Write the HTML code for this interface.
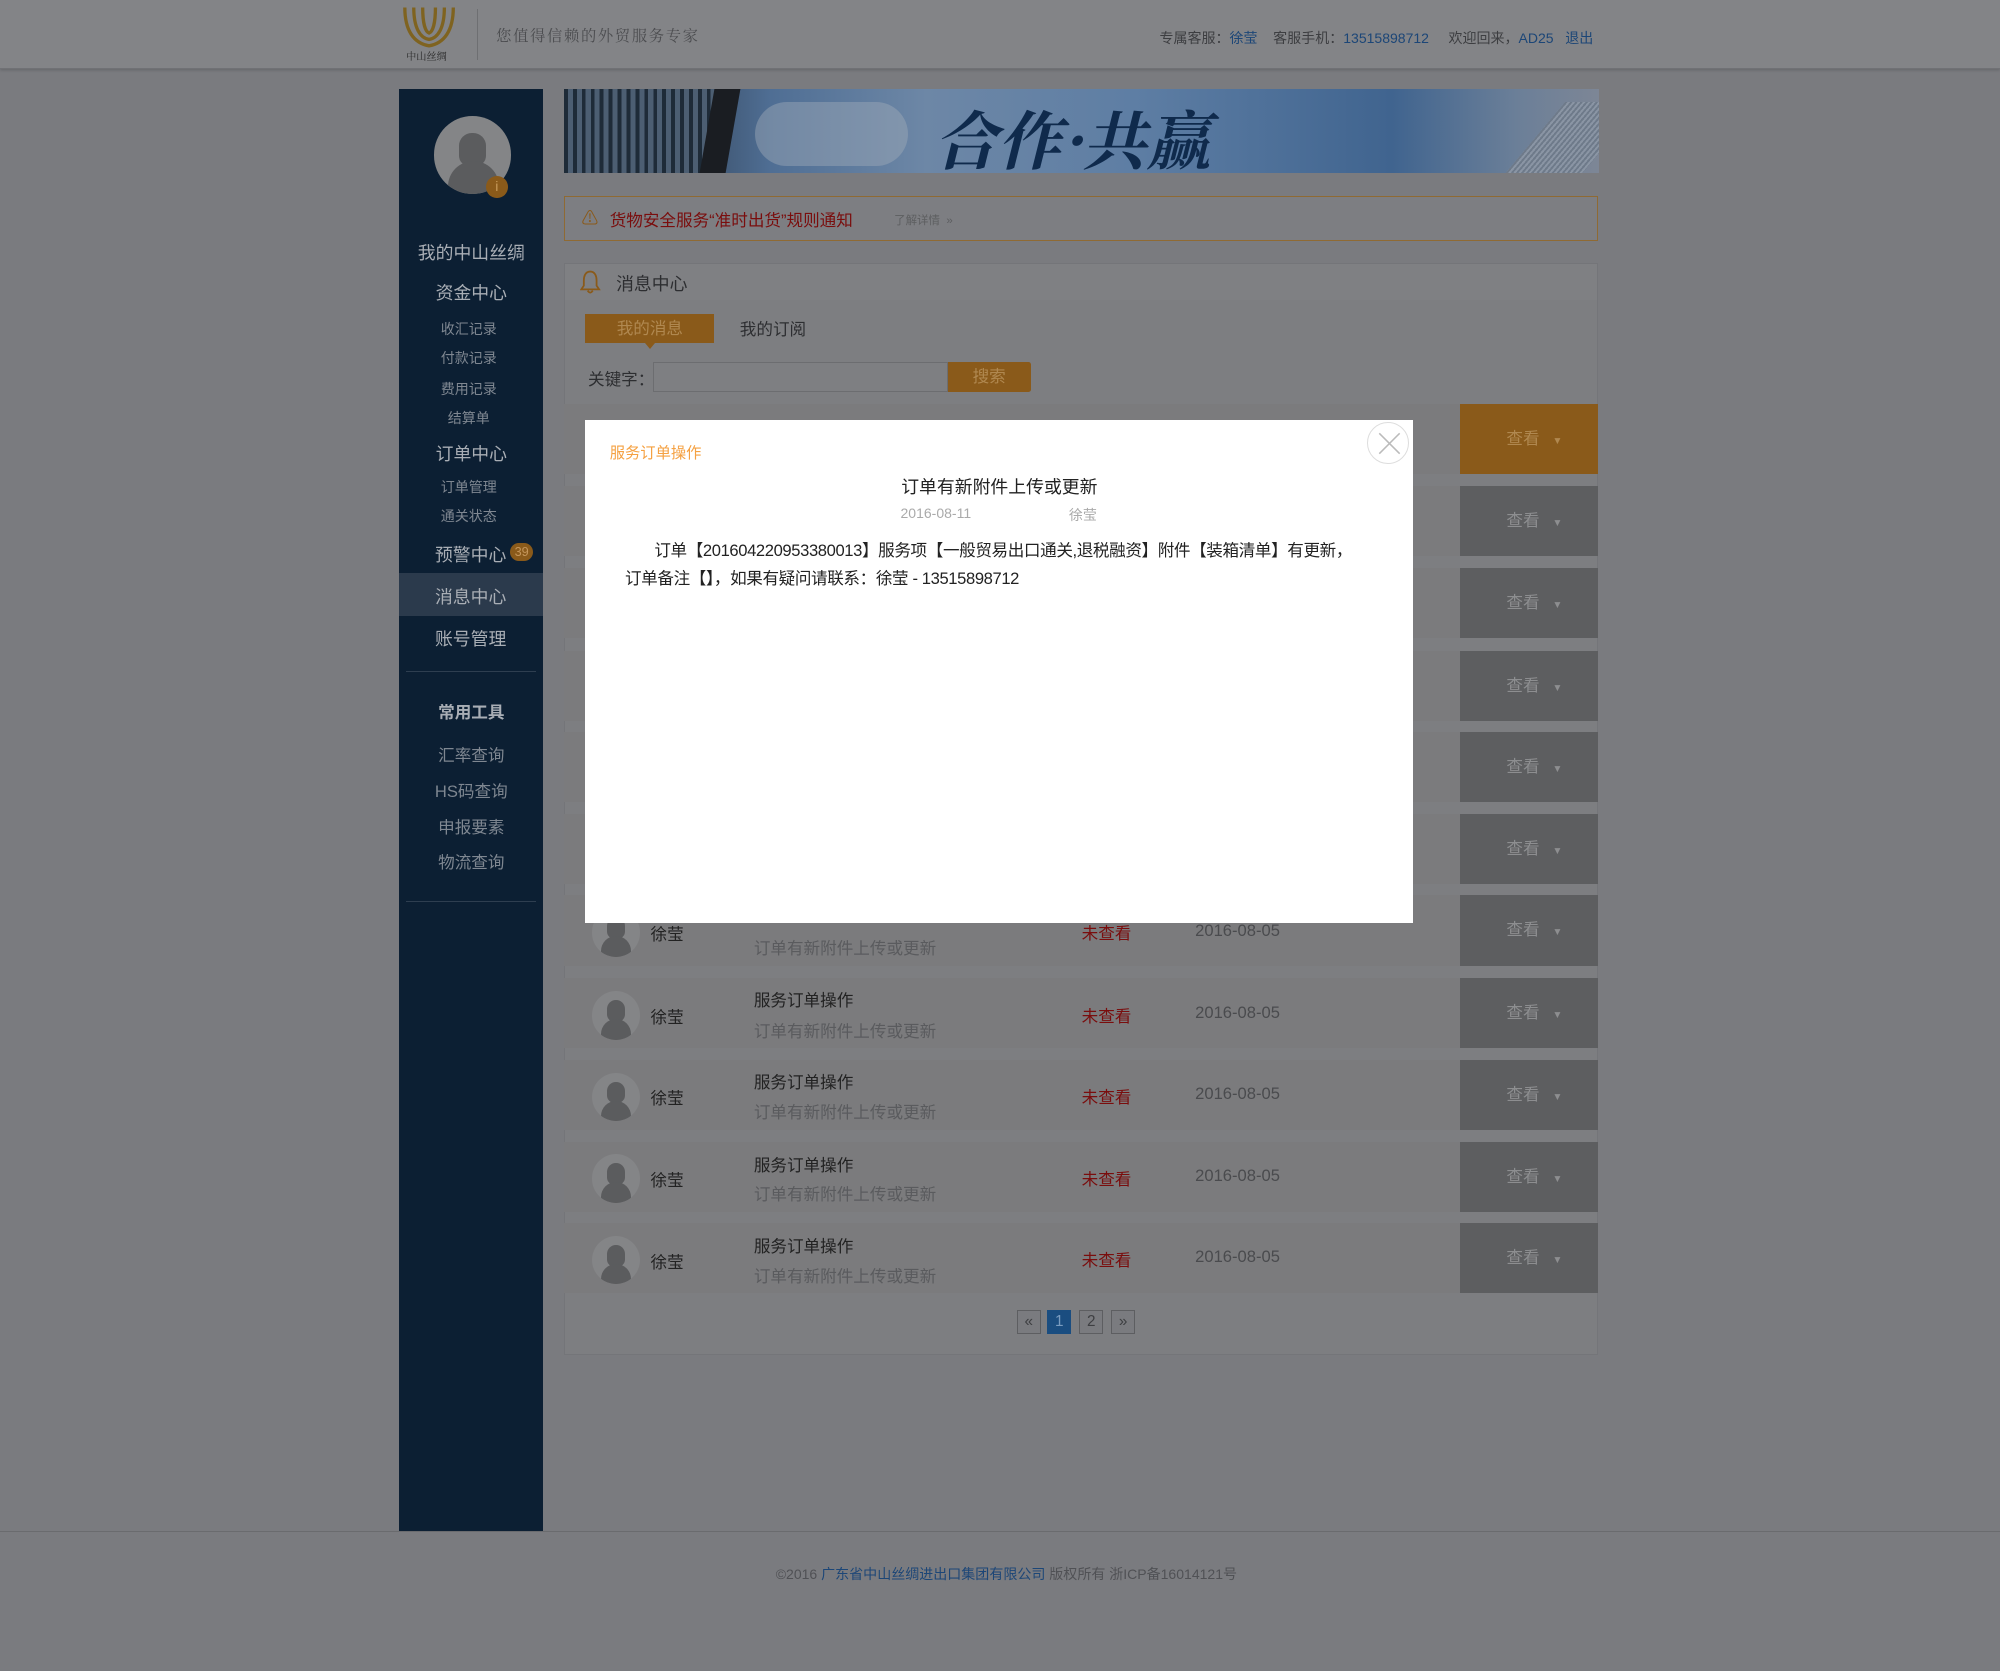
<!DOCTYPE html>
<html><head><meta charset="utf-8">
<style>
html,body{margin:0;padding:0;}
body{width:2000px;height:1671px;overflow:hidden;background:#7a7b7f;font-family:"Liberation Sans","Noto Sans CJK SC",sans-serif;}
#w{zoom:1.27551;width:1568px;height:1310px;position:relative;}
.a{position:absolute;white-space:nowrap;}
.hdr{left:0;top:0;width:1568px;height:53px;background:#838487;border-bottom:1px solid #707175;box-shadow:0 1px 2px rgba(0,0,0,.15);}
.side{left:313px;top:70px;width:113px;height:1130px;background:#0c1f33;}
.m{left:313px;width:113px;text-align:center;color:#9aa0a8;}
.m1{font-size:14px;color:#a9aeb5;}
.m2{font-size:11px;color:#7f8791;}
.ml{left:341px;width:auto;text-align:left;}
.row{left:442px;width:811px;height:55px;background:#7b7b7d;}
.btn{left:1145px;width:108px;height:55px;background:#5d5e60;color:#8d8e90;font-size:13px;text-align:center;line-height:55px;padding-left:8px;box-sizing:border-box;}
.btn span{font-size:8px;margin-left:10px;}
.av{width:38px;height:38px;border-radius:50%;background:#848587;overflow:hidden;}
.av:before{content:"";position:absolute;left:12px;top:7px;width:14px;height:17px;border-radius:7px 7px 6px 6px;background:#5b5c5e;}
.av:after{content:"";position:absolute;left:7px;top:22px;width:24px;height:20px;border-radius:12px 12px 0 0;background:#5b5c5e;}
.pg{top:1027px;height:19px;width:19px;border:1px solid #5d5e61;box-sizing:border-box;font-size:12px;text-align:center;line-height:17px;color:#3e3f42;background:#7a7b7f;}
.d{left:937px;font-size:13px;color:#4a4b4e;}
</style></head><body><div id="w">
<div class="a hdr"></div>
<svg class="a" style="left:314px;top:4px" width="46" height="46" viewBox="0 0 46 46">
<g fill="none" stroke="#7f6320" stroke-width="2.6">
<path d="M3 2 C3 20 10 30 22 32 C34 30 41 20 41 2"/>
<path d="M10 2 C10 18 15 26 22 27 C29 26 34 18 34 2"/>
<path d="M17 2 C17 14 19 21 22 22 C25 21 27 14 27 2"/>
</g>
<text x="4" y="43" font-size="8" fill="#2a2a2a" font-family="Noto Serif CJK SC,serif">中山丝绸</text>
</svg>
<div class="a" style="left:374px;top:7px;width:1px;height:40px;background:#6e6f72"></div>
<div class="a" style="left:389px;top:19px;font-size:12px;color:#4c4d50;letter-spacing:1.3px;font-family:'Noto Serif CJK SC',serif">您值得信赖的外贸服务专家</div>
<div class="a" style="left:909px;top:22px;font-size:11px;color:#3d3e41">专属客服：<span style="color:#1c4677">徐莹</span>&nbsp;&nbsp;&nbsp;&nbsp;客服手机：<span style="color:#1c4677">13515898712</span>&nbsp;&nbsp;&nbsp;&nbsp;&nbsp;欢迎回来，<span style="color:#1c4677">AD25&nbsp;&nbsp;&nbsp;退出</span></div>

<div class="a side"></div>
<div class="a" style="left:340px;top:91px;width:61px;height:61px;border-radius:50%;background:#848587;overflow:hidden">
<div class="a" style="left:20px;top:13px;width:21px;height:26px;border-radius:10px 10px 8px 8px;background:#5b5c5e"></div>
<div class="a" style="left:11px;top:35px;width:40px;height:30px;border-radius:20px 20px 0 0;background:#5b5c5e"></div>
</div>
<div class="a" style="left:381px;top:138px;width:17px;height:17px;border-radius:50%;background:#8a5a1a;color:#c89a5a;font-size:11px;text-align:center;line-height:17px">i</div>
<div class="a m m1" style="top:187px">我的中山丝绸</div>
<div class="a m m1" style="top:219px">资金中心</div>
<div class="a m m2" style="top:250px;left:311px">收汇记录</div>
<div class="a m m2" style="top:273px;left:311px">付款记录</div>
<div class="a m m2" style="top:297px;left:311px">费用记录</div>
<div class="a m m2" style="top:320px;left:311px">结算单</div>
<div class="a m m1" style="top:345px">订单中心</div>
<div class="a m m2" style="top:374px;left:311px">订单管理</div>
<div class="a m m2" style="top:397px;left:311px">通关状态</div>
<div class="a m m1 ml" style="top:424px">预警中心</div>
<div class="a" style="left:400px;top:426px;width:18px;height:14px;border-radius:7px;background:#8a5a1a;color:#c4955a;font-size:10px;text-align:center;line-height:14px">39</div>
<div class="a" style="left:313px;top:449px;width:113px;height:34px;background:#2b3a4c"></div>
<div class="a m m1 ml" style="top:457px">消息中心</div>
<div class="a m m1 ml" style="top:490px">账号管理</div>
<div class="a" style="left:318px;top:526px;width:102px;height:1px;background:#2e3e50"></div>
<div class="a m m1" style="top:548px;font-weight:bold;font-size:13px">常用工具</div>
<div class="a m m1" style="top:582px;font-size:13px;color:#7f8791">汇率查询</div>
<div class="a m m1" style="top:610px;font-size:13px;color:#7f8791">HS码查询</div>
<div class="a m m1" style="top:638px;font-size:13px;color:#7f8791">申报要素</div>
<div class="a m m1" style="top:666px;font-size:13px;color:#7f8791">物流查询</div>
<div class="a" style="left:318px;top:706px;width:102px;height:1px;background:#2e3e50"></div>

<div class="a" style="left:442px;top:70px;width:812px;height:66px;background:linear-gradient(90deg,#2a3a4a 0,#3a4e66 12%,#4f6e94 20%,#6d87a6 35%,#5e7ea4 55%,#40648f 80%,#6b7f98 92%,#7d8696 100%);overflow:hidden">
<div class="a" style="left:0;top:0;width:118px;height:66px;background:repeating-linear-gradient(90deg,#1e2b38 0 3px,#4c5e72 3px 7px)"></div>
<div class="a" style="left:112px;top:0;width:20px;height:66px;background:#1a1d22;transform:skewX(-10deg)"></div>
<div class="a" style="left:150px;top:10px;width:120px;height:50px;border-radius:30px;background:rgba(160,170,185,.45)"></div>
<div class="a" style="left:760px;top:10px;width:60px;height:60px;background:repeating-linear-gradient(90deg,#6e7a8a 0 2px,#8a95a4 2px 4px);transform:skewX(-40deg)"></div>
<div class="a" style="left:290px;top:2px;font-size:50px;color:#0f2a4c;font-family:'Noto Serif CJK SC',serif;font-weight:bold;font-style:italic">合作·共赢</div>
</div>

<div class="a" style="left:442px;top:154px;width:809px;height:33px;border:1px solid #8f6a33;background:#7d7e82"></div>
<div class="a" style="left:456px;top:161px;font-size:13px;color:#8a5a1a">⚠</div>
<div class="a" style="left:478px;top:162px;font-size:13px;color:#7a0d0d">货物安全服务“准时出货”规则通知</div>
<div class="a" style="left:701px;top:166px;font-size:9px;color:#5d5e60">了解详情 &nbsp;»</div>

<div class="a" style="left:442px;top:206px;width:811px;height:856px;background:#7d7e81;border:1px solid #747579;box-sizing:border-box"></div>
<div class="a" style="left:443px;top:207px;width:809px;height:28px;background:#7f8083"></div>
<svg class="a" style="left:455px;top:211px" width="16" height="20" viewBox="0 0 16 20"><path d="M8 2 C4 2 3 6 3 9 L3 13 L1 16 L15 16 L13 13 L13 9 C13 6 12 2 8 2 Z M6 17 Q8 20 10 17" fill="none" stroke="#8a5a1a" stroke-width="1.4"/></svg>
<div class="a" style="left:483px;top:212px;font-size:14px;color:#2d2e31">消息中心</div>
<div class="a" style="left:459px;top:246px;width:101px;height:23px;background:#8a5a1a;color:#b08850;font-size:13px;text-align:center;line-height:23px">我的消息</div>
<div class="a" style="left:506px;top:269px;width:0;height:0;border-left:4px solid transparent;border-right:4px solid transparent;border-top:5px solid #8a5a1a"></div>
<div class="a" style="left:580px;top:248px;font-size:13px;color:#2d2e31">我的订阅</div>
<div class="a" style="left:461px;top:287px;font-size:13px;color:#2d2e31">关键字：</div>
<div class="a" style="left:512px;top:284px;width:231px;height:23px;background:#7e7f82;border:1px solid #6c6d70;box-sizing:border-box"></div>
<div class="a" style="left:743px;top:284px;width:65px;height:23px;background:#8a5a1a;color:#b08850;font-size:13px;text-align:center;line-height:23px;border-radius:0 2px 2px 0">搜索</div>

<div class="a row" style="top:317px"></div><div class="a btn" style="top:317px;background:#8a5a1a;color:#b08850">查看<span>▼</span></div>
<div class="a row" style="top:381px"></div><div class="a btn" style="top:381px">查看<span>▼</span></div>
<div class="a row" style="top:445px"></div><div class="a btn" style="top:445px">查看<span>▼</span></div>
<div class="a row" style="top:510px"></div><div class="a btn" style="top:510px">查看<span>▼</span></div>
<div class="a row" style="top:574px"></div><div class="a btn" style="top:574px">查看<span>▼</span></div>
<div class="a row" style="top:638px"></div><div class="a btn" style="top:638px">查看<span>▼</span></div>

<div class="a row" style="top:702px"></div><div class="a btn" style="top:702px">查看<span>▼</span></div>
<div class="a av" style="left:464px;top:712px"></div>
<div class="a" style="left:510px;top:722px;font-size:13px;color:#222">徐莹</div>
<div class="a" style="left:591px;top:733px;font-size:13px;color:#5a5b5e">订单有新附件上传或更新</div>
<div class="a" style="left:848px;top:721px;font-size:13px;color:#7a0d0d">未查看</div>
<div class="a d" style="top:722px">2016-08-05</div>

<div class="a row" style="top:767px"></div><div class="a btn" style="top:767px">查看<span>▼</span></div>
<div class="a av" style="left:464px;top:777px"></div>
<div class="a" style="left:510px;top:787px;font-size:13px;color:#222">徐莹</div>
<div class="a" style="left:591px;top:774px;font-size:13px;color:#222">服务订单操作</div>
<div class="a" style="left:591px;top:798px;font-size:13px;color:#5a5b5e">订单有新附件上传或更新</div>
<div class="a" style="left:848px;top:786px;font-size:13px;color:#7a0d0d">未查看</div>
<div class="a d" style="top:786px">2016-08-05</div>

<div class="a row" style="top:831px"></div><div class="a btn" style="top:831px">查看<span>▼</span></div>
<div class="a av" style="left:464px;top:841px"></div>
<div class="a" style="left:510px;top:851px;font-size:13px;color:#222">徐莹</div>
<div class="a" style="left:591px;top:838px;font-size:13px;color:#222">服务订单操作</div>
<div class="a" style="left:591px;top:862px;font-size:13px;color:#5a5b5e">订单有新附件上传或更新</div>
<div class="a" style="left:848px;top:850px;font-size:13px;color:#7a0d0d">未查看</div>
<div class="a d" style="top:850px">2016-08-05</div>

<div class="a row" style="top:895px"></div><div class="a btn" style="top:895px">查看<span>▼</span></div>
<div class="a av" style="left:464px;top:905px"></div>
<div class="a" style="left:510px;top:915px;font-size:13px;color:#222">徐莹</div>
<div class="a" style="left:591px;top:903px;font-size:13px;color:#222">服务订单操作</div>
<div class="a" style="left:591px;top:926px;font-size:13px;color:#5a5b5e">订单有新附件上传或更新</div>
<div class="a" style="left:848px;top:914px;font-size:13px;color:#7a0d0d">未查看</div>
<div class="a d" style="top:914px">2016-08-05</div>

<div class="a row" style="top:959px"></div><div class="a btn" style="top:959px">查看<span>▼</span></div>
<div class="a av" style="left:464px;top:969px"></div>
<div class="a" style="left:510px;top:979px;font-size:13px;color:#222">徐莹</div>
<div class="a" style="left:591px;top:967px;font-size:13px;color:#222">服务订单操作</div>
<div class="a" style="left:591px;top:990px;font-size:13px;color:#5a5b5e">订单有新附件上传或更新</div>
<div class="a" style="left:848px;top:978px;font-size:13px;color:#7a0d0d">未查看</div>
<div class="a d" style="top:978px">2016-08-05</div>

<div class="a pg" style="left:797px">«</div>
<div class="a pg" style="left:821px;background:#1a4d80;border-color:#1a4d80;color:#7a9cc0">1</div>
<div class="a pg" style="left:846px">2</div>
<div class="a pg" style="left:871px">»</div>

<div class="a" style="left:0;top:1200px;width:1568px;height:1px;background:#6a6b6e"></div>
<div class="a" style="left:0;top:1226px;width:1578px;text-align:center;font-size:11px;color:#505155">©2016 <span style="color:#1c4677">广东省中山丝绸进出口集团有限公司</span> 版权所有 浙ICP备16014121号</div>

<div class="a" style="left:459px;top:329px;width:649px;height:395px;background:#fff"></div>
<div class="a" style="left:1072px;top:331px;width:33px;height:33px;border:1px solid #ddd;border-radius:50%;box-sizing:border-box"></div>
<svg class="a" style="left:1080px;top:339px" width="18" height="18" viewBox="0 0 18 18"><path d="M1 1 L17 17 M17 1 L1 17" stroke="#bbb" stroke-width="1.2"/></svg>
<div class="a" style="left:478px;top:346px;font-size:12px;color:#f5a142">服务订单操作</div>
<div class="a" style="left:459px;top:371px;width:649px;text-align:center;font-size:14px;color:#222">订单有新附件上传或更新</div>
<div class="a" style="left:706px;top:396px;font-size:11px;color:#aaa">2016-08-11</div>
<div class="a" style="left:838px;top:396px;font-size:11px;color:#aaa">徐莹</div>
<div class="a" style="left:490px;top:421px;width:574px;white-space:normal;font-size:13px;line-height:22px;color:#222;text-indent:23px;letter-spacing:-0.3px">订单【201604220953380013】服务项【一般贸易出口通关,退税融资】附件【装箱清单】有更新，订单备注【】，如果有疑问请联系：徐莹 - 13515898712</div>
</div></body></html>
